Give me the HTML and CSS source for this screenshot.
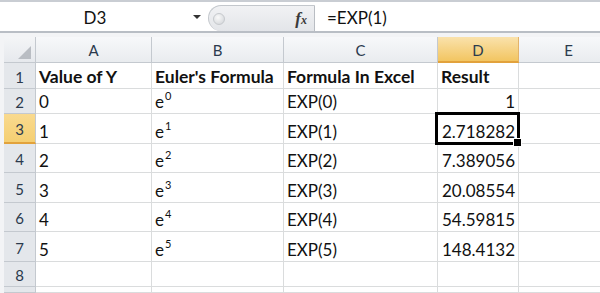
FILE: index.html
```html
<!DOCTYPE html>
<html lang="en">
<head>
    <meta charset="UTF-8">
    <title>EXP in Excel</title>
    <link rel="stylesheet" href="styles.css">
</head>
<body>
    <div class="formula-bar">
        <div class="name-box">D3</div>
        <div class="name-arrow"></div>
        <div class="fx-box">
            <span class="knob"></span>
            <span class="fx">f<span class="fx-x">x</span></span>
        </div>
        <div class="formula-input">=EXP(1)</div>
    </div>

    <div class="sheet">
        <!-- column headers -->
        <div class="corner"><span class="corner-tri"></span></div>
        <div class="col-head">A</div>
        <div class="col-head">B</div>
        <div class="col-head">C</div>
        <div class="col-head active">D</div>
        <div class="col-head">E</div>

        <div class="row-head">1</div>
        <div class="cell bold">Value of Y</div>
        <div class="cell bold">Euler's Formula</div>
        <div class="cell bold">Formula In Excel</div>
        <div class="cell bold">Result</div>
        <div class="cell"></div>

        <div class="row-head">2</div>
        <div class="cell">0</div>
        <div class="cell"><span>e<sup>0</sup></span></div>
        <div class="cell">EXP(0)</div>
        <div class="cell num">1</div>
        <div class="cell"></div>

        <div class="row-head active">3</div>
        <div class="cell">1</div>
        <div class="cell"><span>e<sup>1</sup></span></div>
        <div class="cell">EXP(1)</div>
        <div class="cell num selected">2.718282</div>
        <div class="cell"></div>

        <div class="row-head">4</div>
        <div class="cell">2</div>
        <div class="cell"><span>e<sup>2</sup></span></div>
        <div class="cell">EXP(2)</div>
        <div class="cell num">7.389056</div>
        <div class="cell"></div>

        <div class="row-head">5</div>
        <div class="cell">3</div>
        <div class="cell"><span>e<sup>3</sup></span></div>
        <div class="cell">EXP(3)</div>
        <div class="cell num">20.08554</div>
        <div class="cell"></div>

        <div class="row-head">6</div>
        <div class="cell">4</div>
        <div class="cell"><span>e<sup>4</sup></span></div>
        <div class="cell">EXP(4)</div>
        <div class="cell num">54.59815</div>
        <div class="cell"></div>

        <div class="row-head">7</div>
        <div class="cell">5</div>
        <div class="cell"><span>e<sup>5</sup></span></div>
        <div class="cell">EXP(5)</div>
        <div class="cell num">148.4132</div>
        <div class="cell"></div>

        <div class="row-head">8</div>
        <div class="cell"></div>
        <div class="cell"></div>
        <div class="cell"></div>
        <div class="cell"></div>
        <div class="cell"></div>

        <div class="row-head"></div>
        <div class="cell"></div>
        <div class="cell"></div>
        <div class="cell"></div>
        <div class="cell"></div>
        <div class="cell"></div>
    </div>
</body>
</html>
```

FILE: styles.css
```css
:root {
    --grid: #dadcdd;
    --head-line: #c4c9cf;
    --head-text: #2b3a4d;
    --sel-line: #e2a23c;
}

* {
    margin: 0;
    padding: 0;
    box-sizing: border-box;
}

body {
    width: 600px;
    height: 293px;
    overflow: hidden;
    background: #f3f4f6;
    font-family: Lato, 'Liberation Sans', sans-serif;
    color: #111;
}

/* formula bar */
.formula-bar {
    display: flex;
    align-items: stretch;
    height: 33px;
    background: #fff;
    border-top: 2px solid #c9cdd3;
    border-bottom: 2px solid #b9bec5;
}

.name-box {
    width: 190px;
    display: flex;
    align-items: center;
    justify-content: center;
    font-size: 17px;
    padding-top: 1px;
    color: #111;
}

.name-arrow {
    width: 18px;
    display: flex;
    align-items: center;
}

.name-arrow::before {
    content: "";
    border-left: 4px solid transparent;
    border-right: 4px solid transparent;
    border-top: 4px solid #333;
    margin-left: 3px;
}

.fx-box {
    width: 107px;
    margin-top: 3px;
    display: flex;
    align-items: center;
    justify-content: space-between;
    padding: 0 7px 0 4px;
    background: linear-gradient(#f1f2f4, #e3e5e9);
    border: 1px solid #c3c7cc;
    border-right: 1px solid #b9bdc3;
    border-bottom: none;
    border-radius: 13px 0 0 13px;
}

.knob {
    width: 12px;
    height: 12px;
    border-radius: 50%;
    background: radial-gradient(circle at 40% 35%, #fafafa, #cfd2d6);
    border: 1px solid #c6c9cd;
}

.fx {
    font-family: 'Liberation Serif', serif;
    font-style: italic;
    font-weight: bold;
    font-size: 17px;
    color: #3a3a3a;
}

.fx-x {
    font-size: 12px;
}

.formula-input {
    flex: 1;
    display: flex;
    align-items: center;
    padding-left: 12px;
    padding-top: 1px;
    font-size: 17px;
    color: #111;
}

/* worksheet */
.sheet {
    display: grid;
    margin: 4px 0 0 4px;
    grid-template-columns: 32px 116px 132px 154px 81px 100px;
    grid-template-rows: 26px 26px 25px 30px 29px 30px 29px 30px 25px 6px;
}

.corner {
    position: relative;
    background: linear-gradient(#f4f5f7, #e6e9ed);
    border-right: 1px solid var(--head-line);
    border-bottom: 1px solid var(--head-line);
}

.corner-tri {
    position: absolute;
    right: 4px;
    bottom: 3px;
    border-left: 13px solid transparent;
    border-bottom: 13px solid #b9bdc3;
}

.col-head {
    display: flex;
    align-items: center;
    justify-content: center;
    padding-top: 1px;
    font-size: 15px;
    color: var(--head-text);
    background: linear-gradient(#f7f8fa, #e9ecef);
    border-right: 1px solid var(--head-line);
    border-bottom: 1px solid var(--head-line);
}

.col-head.active {
    background: linear-gradient(#fae2ac, #f2c561);
    border-bottom: 2px solid var(--sel-line);
    border-right-color: #e3b36a;
}

.row-head {
    display: flex;
    align-items: center;
    justify-content: center;
    padding-top: 2px;
    font-size: 15px;
    color: var(--head-text);
    background: #e4e7eb;
    border-right: 1px solid var(--head-line);
    border-bottom: 1px solid var(--head-line);
}

.row-head.active {
    background: linear-gradient(#f9da8f, #f5cf72);
    border-bottom: 2px solid var(--sel-line);
}

.cell {
    display: flex;
    align-items: flex-end;
    padding: 0 3px 1px 3px;
    line-height: 20px;
    font-size: 17px;
    white-space: nowrap;
    background: #fff;
    border-right: 1px solid var(--grid);
    border-bottom: 1px solid var(--grid);
}

.cell.bold {
    font-weight: bold;
    font-size: 17.5px;
}

.cell.num {
    justify-content: flex-end;
}

.cell sup {
    font-size: 11px;
    line-height: 1;
    vertical-align: 8px;
    margin-left: 1px;
}

/* active cell outline and fill handle */
.cell.selected {
    position: relative;
}

.cell.selected::after {
    content: "";
    position: absolute;
    top: -2px;
    left: -3px;
    right: -2px;
    bottom: -2px;
    border: 3px solid #000;
    z-index: 2;
}

.cell.selected::before {
    content: "";
    position: absolute;
    right: -4px;
    bottom: -4px;
    width: 7px;
    height: 7px;
    background: #000;
    border: 1px solid #fff;
    z-index: 3;
}
```
